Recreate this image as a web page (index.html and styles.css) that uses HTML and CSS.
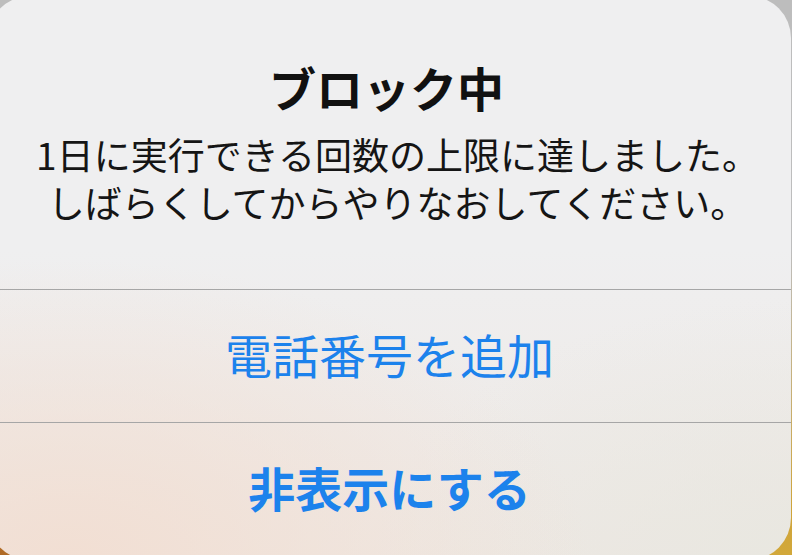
FILE: index.html
```html
<!DOCTYPE html>
<html lang="ja">
<head>
<meta charset="utf-8">
<link rel="stylesheet" href="styles.css">
</head>
<body>
<div class="backdrop">
  <div class="alert">
    <div class="alert-body">
      <h1 class="alert-title">ブロック中</h1>
      <p class="alert-message"><span class="msg-line">1日に実行できる回数の上限に達しました。</span><span class="msg-line">しばらくしてからやりなおしてください。</span></p>
    </div>
    <div class="divider"></div>
    <div class="alert-button">電話番号を追加</div>
    <div class="divider"></div>
    <div class="alert-button alert-button-bold">非表示にする</div>
  </div>
</div>
</body>
</html>
```
FILE: styles.css
```css
html, body {
  margin: 0;
  padding: 0;
  width: 792px;
  height: 555px;
  overflow: hidden;
}

body {
  font-family: "Noto Sans CJK JP", "Noto Sans", sans-serif;
}

.backdrop {
  width: 792px;
  height: 555px;
  overflow: hidden;
  background:
    radial-gradient(circle at 0% 100%, #b06a25 0, #b6742c 60px, rgba(182,116,44,0) 200px),
    linear-gradient(to bottom, #bdbdbd 0%, #bdbdbd 45%, #cfa43a 92%, #d2a83a 100%);
}

.alert {
  margin: -4px 0 0 -12px;
  width: 803px;
  height: 564px;
  border-radius: 42px;
  display: flex;
  flex-direction: column;
  overflow: hidden;
  background:
    radial-gradient(ellipse 520px 300px at 10% 100%, rgba(242,222,210,0.95), rgba(242,222,210,0)),
    radial-gradient(ellipse 420px 260px at 100% 100%, rgba(232,231,224,0.9), rgba(232,231,224,0)),
    linear-gradient(to bottom, #efeff0 0%, #efeff0 45%, #eee8e3 100%);
}

.alert-body {
  padding: 63px 0 63px;
  text-align: center;
}

.alert-title {
  margin: 0;
  padding-right: 6px;
  font-size: 47px;
  line-height: 56px;
  font-weight: 700;
  color: #111111;
}

.alert-message {
  margin: 15px 0 0;
  padding-left: 16px;
  font-size: 37px;
  font-weight: 400;
  color: #151515;
}

.msg-line {
  display: block;
  height: 48px;
  line-height: 48px;
}

.divider {
  height: 1px;
  background: #a6a6a6;
}

.alert-button {
  height: 132px;
  box-sizing: border-box;
  padding-bottom: 6px;
  display: flex;
  align-items: center;
  justify-content: center;
  font-size: 47px;
  color: #1c82ec;
}

.alert-button-bold {
  font-weight: 700;
}
```
